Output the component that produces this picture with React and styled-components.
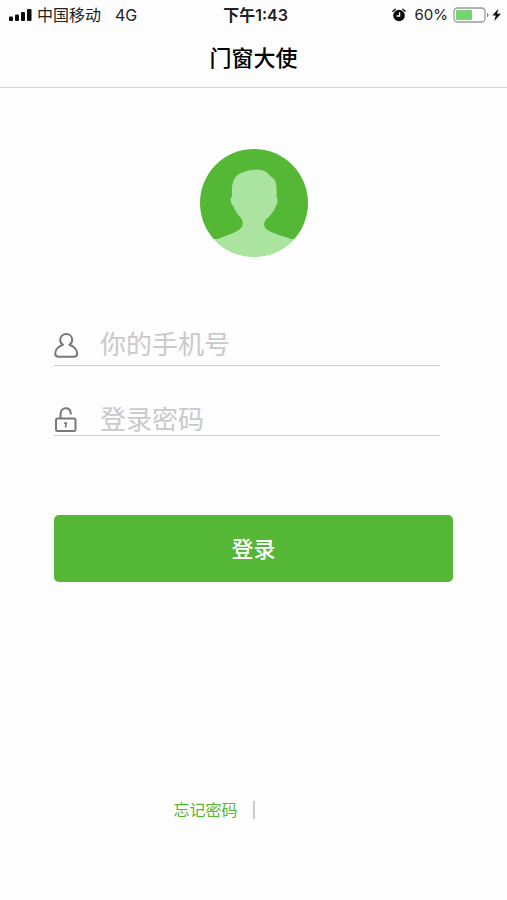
import React, { useState } from "react";
import styled, { createGlobalStyle } from "styled-components";

export default function App() {
    const [phone, setPhone] = useState("");
    const [password, setPassword] = useState("");

    const handleSubmit = (event) => {
        event.preventDefault();
    };

    return (
        <>
            <GlobalStyle />
            <Page>
                <StatusBar />
                <NavBar>
                    <h1>门窗大使</h1>
                </NavBar>
                <Main>
                    <Avatar />
                    <LoginForm onSubmit={handleSubmit}>
                        <Field $top={4}>
                            <UserIcon />
                            <input
                                type="tel"
                                aria-label="你的手机号"
                                placeholder="你的手机号"
                                value={phone}
                                onChange={(e) => setPhone(e.target.value)}
                            />
                        </Field>
                        <Field $top={14}>
                            <LockIcon />
                            <input
                                type="password"
                                aria-label="登录密码"
                                placeholder="登录密码"
                                value={password}
                                onChange={(e) => setPassword(e.target.value)}
                            />
                        </Field>
                        <SubmitButton type="submit">登录</SubmitButton>
                    </LoginForm>
                </Main>
                <Footer>
                    <a href="#forgot">忘记密码</a>
                    <Divider />
                </Footer>
            </Page>
        </>
    );
}

function StatusBar() {
    return (
        <StatusRow>
            <StatusGroup>
                <svg width="23" height="14" viewBox="0 0 23 14" fill="#0b0b0b">
                    <rect x="0" y="8.500" width="4" height="4.500" rx="1" />
                    <rect x="6" y="6.500" width="4" height="6.500" rx="1" />
                    <rect x="12" y="4" width="4" height="9" rx="1" />
                    <rect x="18" y="1" width="4.500" height="12" rx="1" />
                </svg>
                <span>中国移动</span>
                <Network>4G</Network>
            </StatusGroup>
            <Clock>下午1:43</Clock>
            <StatusGroup $end>
                <AlarmIcon />
                <Percent>60%</Percent>
                <BatteryIcon />
            </StatusGroup>
        </StatusRow>
    );
}

function AlarmIcon() {
    return (
        <svg width="14" height="14" viewBox="0 0 14 14">
            <circle cx="7" cy="7.5" r="5.8" fill="#0b0b0b" />
            <path d="M.9 3.2 3.2 1.200M13.100 3.200 10.800 1.200" stroke="#0b0b0b" strokeWidth="1.300" strokeLinecap="round" />
            <path d="M7.6 4.2v3.800H4.600" fill="none" stroke="#fff" strokeWidth="1.300" />
        </svg>
    );
}

function BatteryIcon() {
    return (
        <svg width="49" height="16" viewBox="0 0 49 16">
            <rect x="1" y="1" width="31" height="14" rx="3.5" fill="#fff" stroke="#999" strokeWidth="1.3" />
            <rect x="3" y="3" width="16" height="10" rx="1" fill="#74d572" />
            <path d="M34 6c2 .6 2 3.4 0 4z" fill="#888" />
            <path d="M45.400 1.800 39.400 8.600h3.400l-1.600 5.400L48 6.800h-4z" fill="#0b0b0b" />
        </svg>
    );
}

function Avatar() {
    return (
        <AvatarCircle viewBox="0 0 108 108" role="img" aria-label="头像">
            <clipPath id="avatar-clip">
                <circle cx="54" cy="54" r="54" />
            </clipPath>
            <g clipPath="url(#avatar-clip)">
                <rect width="108" height="90" fill="#54b735" />
                <rect y="90" width="108" height="18" fill="#abe4a1" />
                <path
                    d="M12 93C24 86 37 84.500 41.500 78.500C43.500 75.500 43 71 40.500 68.500C37 65 35 61 33.500 57.500C31.500 56 30.500 52.500 30.800 49.500C31 48.500 31.700 48 32 47C31.700 39 32 32.500 36 27.500C41 22.500 50 20.500 58 20.700C62 20.800 66 22 68 24.500C70 27.500 73 28.500 74.500 30.500C77 35 76.800 41 76.500 48C78.500 50 77.500 55 75.500 58C73 64 69 68 66 70.500C63.500 74 63.500 77 65.500 79.500C71 84.500 86 87.500 96 92V108H12Z"
                    fill="#abe4a1"
                />
            </g>
        </AvatarCircle>
    );
}

function UserIcon() {
    return (
        <svg width="26" height="26" viewBox="0 0 26 26" fill="none" stroke="#787878" strokeWidth="2" strokeLinejoin="round">
            <path d="M9 12.800C7.200 11.600 6.200 9.800 6.200 7.900C6.200 4.400 8.900 2 12.200 2S18.200 4.400 18.200 7.900C18.200 9.800 17.200 11.600 15.400 12.800C19.500 14.200 23.200 17.600 23.200 21.400C23.200 23.800 21.800 24.800 19.800 24.800H4.600C2.600 24.800 1.200 23.800 1.200 21.400C1.200 17.600 4.900 14.200 9 12.800Z" />
        </svg>
    );
}

function LockIcon() {
    return (
        <svg width="26" height="26" viewBox="0 0 26 26" fill="none" stroke="#787878" strokeWidth="2">
            <rect x="2" y="11.500" width="19.500" height="12.500" rx="1.500" />
            <path d="M6.500 11.500V7C6.500 3.600 8.700 1.300 11.700 1.300C14.300 1.300 16.300 2.900 16.700 5.700V7.500" />
            <path d="M11.800 15.200v5.400M10 16h3" strokeWidth="1.700" />
        </svg>
    );
}

const GlobalStyle = createGlobalStyle`
*{
    box-sizing: border-box;
}
body{
    margin: 0;
    background-color: #fdfdfd;
    font-family: Inter, "Noto Sans CJK SC", sans-serif;
}
svg{
    display: block;
    flex-shrink: 0;
}
`;

const Page = styled.div`
display: flex;
flex-direction: column;
min-height: 100vh;
`;

const StatusRow = styled.header`
display: grid;
grid-template-columns: 1fr auto 1fr;
align-items: center;
height: 30px;
padding: 0 5px 0 9px;
font-size: 16px;
line-height: 24px;
color: #222;
`;

const StatusGroup = styled.div`
display: flex;
align-items: center;
justify-content: ${({ $end }) => ($end ? "flex-end" : "flex-start")};
gap: 5px;
white-space: nowrap;
`;

const Network = styled.span`
margin-left: 9px;
`;

const Clock = styled.time`
font-weight: 600;
`;

const Percent = styled.span`
margin-left: 4px;
font-size: 15px;
`;

const NavBar = styled.div`
display: flex;
align-items: center;
justify-content: center;
height: 58px;
padding-bottom: 2px;
border-bottom: 1px solid #d2d2d2;
h1{
    margin: 0;
    font-size: 22px;
    line-height: 32px;
    font-weight: 500;
    color: #000;
}
`;

const Main = styled.main`
flex: 1;
display: flex;
flex-direction: column;
align-items: center;
padding: 61px 54px 0;
`;

const AvatarCircle = styled.svg`
width: 108px;
height: 108px;
`;

const LoginForm = styled.form`
display: flex;
flex-direction: column;
width: 100%;
margin-top: 63px;
`;

const Field = styled.label`
display: flex;
align-items: center;
gap: 20px;
height: 46px;
margin-right: 13px;
padding-top: ${({ $top }) => $top}px;
border-bottom: 1px solid #d0d0d0;
& + &{
    margin-top: 24px;
}
input{
    flex: 1;
    min-width: 0;
    height: 40px;
    padding: 0;
    border: 0;
    outline: none;
    background: transparent;
    font-family: inherit;
    font-size: 26px;
    color: #333;
}
input::placeholder{
    color: #c9c9cc;
    opacity: 1;
}
`;

const SubmitButton = styled.button`
height: 67px;
margin-top: 79px;
padding: 0 0 4px;
border: 0;
border-radius: 5px;
background-color: #54b735;
font-family: inherit;
font-size: 22px;
font-weight: 500;
color: #fff;
cursor: pointer;
`;

const Footer = styled.footer`
display: grid;
grid-template-columns: 1fr auto 1fr;
align-items: center;
gap: 15px;
padding-bottom: 78px;
a{
    justify-self: end;
    font-size: 16px;
    line-height: 24px;
    color: #54b735;
    text-decoration: none;
}
`;

const Divider = styled.span`
width: 2px;
height: 18px;
background-color: #ccc;
`;
